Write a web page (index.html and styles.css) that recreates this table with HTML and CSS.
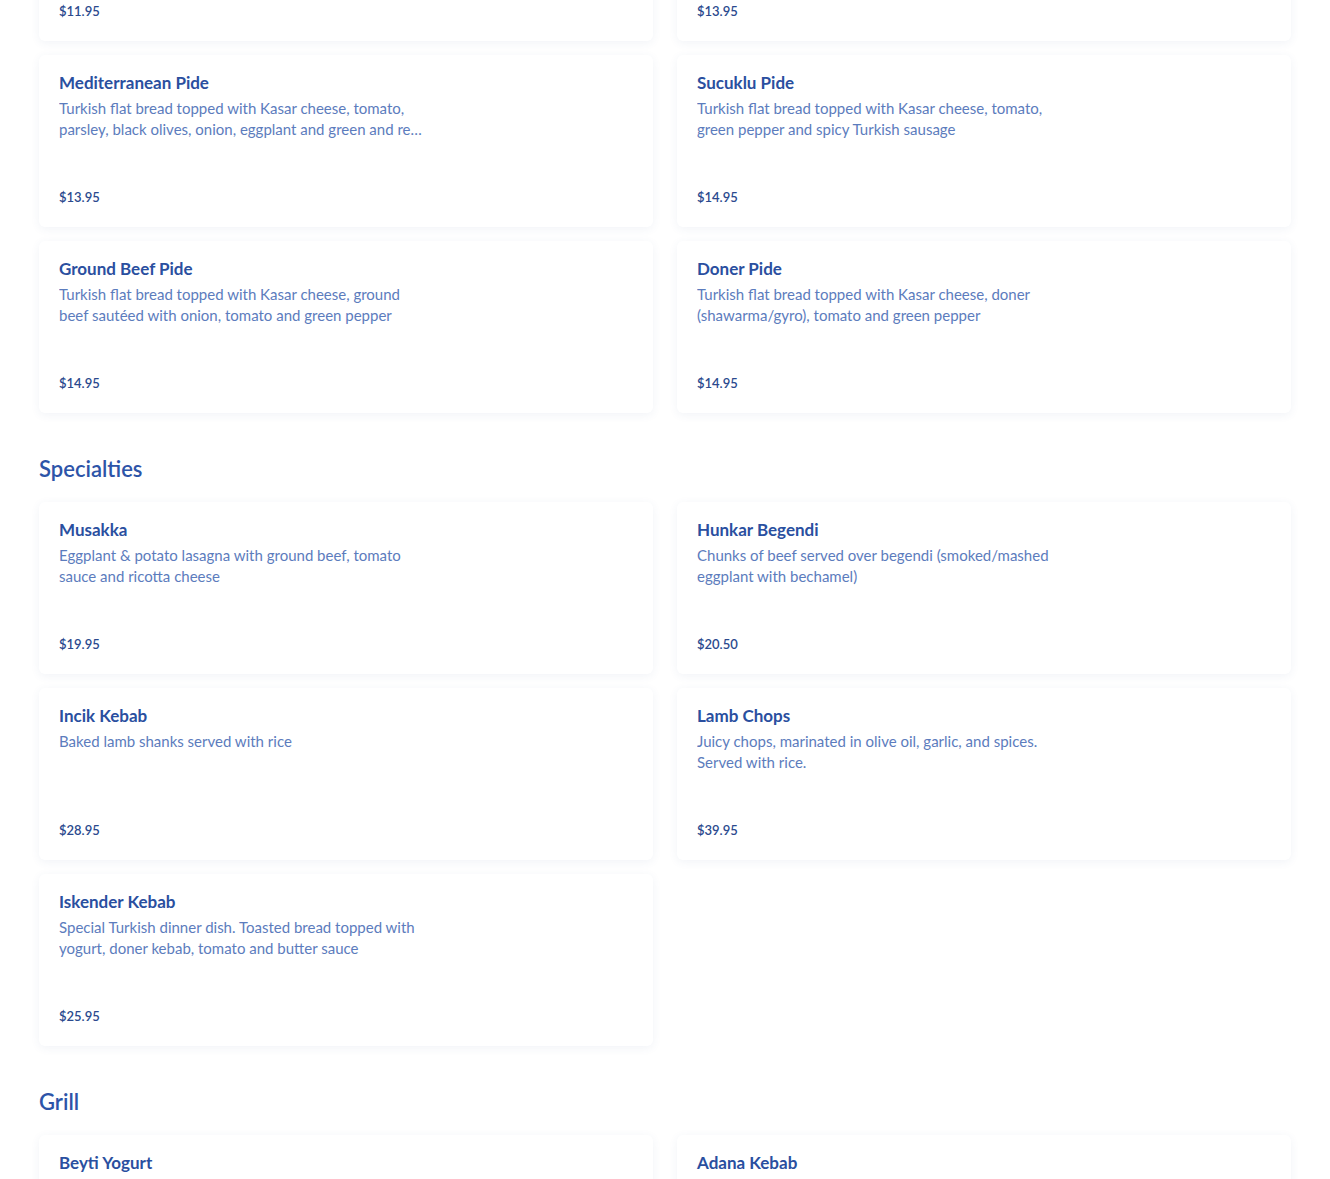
FILE: index.html
```html
<!DOCTYPE html>
<html lang="en">
<head>
  <meta charset="UTF-8">
  <meta name="viewport" content="width=device-width, initial-scale=1.0">
  <title>Menu</title>
  <link rel="stylesheet" href="styles.css">
</head>
<body>
  <div class="menu">

    <!-- Pide (scrolled) -->
    <section class="section section-scrolled">
      <div class="grid">
        <div class="card">
          <h3 class="item-name">Cheese Pide</h3>
          <p class="item-desc">Turkish flat bread topped with Kasar cheese</p>
          <span class="item-price">$11.95</span>
        </div>
        <div class="card">
          <h3 class="item-name">Spinach Pide</h3>
          <p class="item-desc">Turkish flat bread topped with Kasar cheese and spinach</p>
          <span class="item-price">$13.95</span>
        </div>
        <div class="card">
          <h3 class="item-name">Mediterranean Pide</h3>
          <p class="item-desc">Turkish flat bread topped with Kasar cheese, tomato, parsley, black olives, onion, eggplant and green and red pepper</p>
          <span class="item-price">$13.95</span>
        </div>
        <div class="card">
          <h3 class="item-name">Sucuklu Pide</h3>
          <p class="item-desc">Turkish flat bread topped with Kasar cheese, tomato, green pepper and spicy Turkish sausage</p>
          <span class="item-price">$14.95</span>
        </div>
        <div class="card">
          <h3 class="item-name">Ground Beef Pide</h3>
          <p class="item-desc">Turkish flat bread topped with Kasar cheese, ground beef sautéed with onion, tomato and green pepper</p>
          <span class="item-price">$14.95</span>
        </div>
        <div class="card">
          <h3 class="item-name">Doner Pide</h3>
          <p class="item-desc">Turkish flat bread topped with Kasar cheese, doner (shawarma/gyro), tomato and green pepper</p>
          <span class="item-price">$14.95</span>
        </div>
      </div>
    </section>

    <!-- Specialties -->
    <section class="section">
      <h2 class="section-title">Specialties</h2>
      <div class="grid">
        <div class="card">
          <h3 class="item-name">Musakka</h3>
          <p class="item-desc">Eggplant &amp; potato lasagna with ground beef, tomato sauce and ricotta cheese</p>
          <span class="item-price">$19.95</span>
        </div>
        <div class="card">
          <h3 class="item-name">Hunkar Begendi</h3>
          <p class="item-desc">Chunks of beef served over begendi (smoked/mashed eggplant with bechamel)</p>
          <span class="item-price">$20.50</span>
        </div>
        <div class="card">
          <h3 class="item-name">Incik Kebab</h3>
          <p class="item-desc">Baked lamb shanks served with rice</p>
          <span class="item-price">$28.95</span>
        </div>
        <div class="card">
          <h3 class="item-name">Lamb Chops</h3>
          <p class="item-desc">Juicy chops, marinated in olive oil, garlic, and spices. Served with rice.</p>
          <span class="item-price">$39.95</span>
        </div>
        <div class="card">
          <h3 class="item-name">Iskender Kebab</h3>
          <p class="item-desc">Special Turkish dinner dish. Toasted bread topped with yogurt, doner kebab, tomato and butter sauce</p>
          <span class="item-price">$25.95</span>
        </div>
      </div>
    </section>

    <!-- Grill -->
    <section class="section">
      <h2 class="section-title">Grill</h2>
      <div class="grid">
        <div class="card">
          <h3 class="item-name">Beyti Yogurt</h3>
          <p class="item-desc">Ground lamb kebab wrapped in lavash, served over yogurt and tomato sauce</p>
          <span class="item-price">$22.95</span>
        </div>
        <div class="card">
          <h3 class="item-name">Adana Kebab</h3>
          <p class="item-desc">Hand-minced lamb seasoned with red pepper, grilled on a skewer, served with rice</p>
          <span class="item-price">$21.95</span>
        </div>
      </div>
    </section>

  </div>
</body>
</html>
```

FILE: styles.css
```css
body {
  margin: 0;
  background: #ffffff;
  font-family: 'Lato', 'Noto Sans', sans-serif;
  color: #2c4f9c;
}
.menu {
  padding: 0 39px;
  margin-top: -131px;
}
.section {
  margin-bottom: 41px;
}
.section-title {
  margin: 0 0 18px;
  font-size: 22px;
  font-weight: 600;
  line-height: 30px;
  color: #2d54a8;
}
.grid {
  display: grid;
  grid-template-columns: 1fr 1fr;
  column-gap: 24px;
  row-gap: 14px;
}
.card {
  display: flex;
  flex-direction: column;
  height: 172px;
  box-sizing: border-box;
  padding: 17px 20px 20px;
  background: #ffffff;
  border-radius: 6px;
  box-shadow: 0 2px 10px rgba(60, 80, 140, 0.07);
}
.item-name {
  margin: 0 0 4px;
  font-size: 17px;
  font-weight: 700;
  line-height: 22px;
  color: #2a4f9f;
}
.item-desc {
  margin: 0;
  max-width: 368px;
  font-size: 15px;
  line-height: 21px;
  color: #5c7cbd;
  display: -webkit-box;
  -webkit-line-clamp: 2;
  -webkit-box-orient: vertical;
  overflow: hidden;
}
.item-price {
  margin-top: auto;
  font-size: 13px;
  font-weight: 600;
  line-height: 20px;
  color: #2b4a8e;
}
```
